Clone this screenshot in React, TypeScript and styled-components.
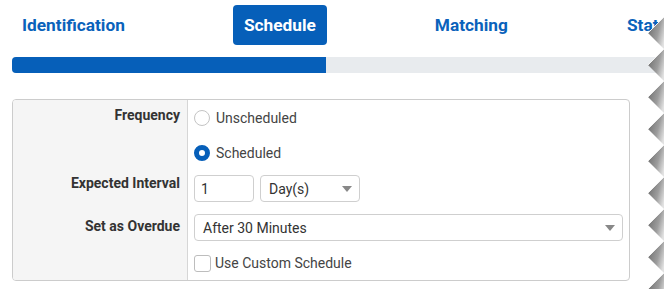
import React from 'react';
import styled, { createGlobalStyle } from 'styled-components';

const GlobalStyle = createGlobalStyle`
  html, body {
    margin: 0;
    padding: 0;
    background: #ffffff;
    font-family: Roboto, "Noto Sans", "Liberation Sans", sans-serif;
  }
`;

const steps = ['Identification', 'Schedule', 'Matching', 'Status'];
const activeStep = 1;

const TornEdge = () => {
  const teeth = Array.from({ length: 9 }, (_, i) => 17 + i * 32);
  return (
    <EdgeSvg width="16" height="289" viewBox="0 0 16 289">
      <defs>
        <linearGradient id="tooth" x1="0" y1="0.25" x2="1" y2="0.75">
          <stop offset="0" stopColor="#6e6e6e" />
          <stop offset="0.6" stopColor="#9d9d9d" />
          <stop offset="1" stopColor="#e2e2e2" />
        </linearGradient>
      </defs>
      {teeth.map((y) => (
        <g key={y}>
          <polygon points={`16,${y} 0,${y + 16} 16,${y + 32}`} fill="url(#tooth)" />
          <polyline points={`16,${y} 0,${y + 16}`} stroke="#f2f2f2" strokeWidth="1" fill="none" />
        </g>
      ))}
    </EdgeSvg>
  );
};

const Caret = () => (
  <CaretSvg width="10" height="6" viewBox="0 0 10 6">
    <polygon points="0,0 10,0 5,6" fill="#888" />
  </CaretSvg>
);

export default function App() {
  return (
    <>
      <GlobalStyle />
      <Page>
        <Steps>
          {steps.map((s, i) => (
            <Step key={s} active={i === activeStep}>
              {s}
            </Step>
          ))}
        </Steps>
        <Progress>
          <ProgressFill style={{ width: 314 }} />
        </Progress>

        <Panel>
          <Label pad={7}>Frequency</Label>
          <Field>
            <Option>
              <Radio />
              Unscheduled
            </Option>
            <Option>
              <Radio checked />
              Scheduled
            </Option>
          </Field>

          <Label pad={5}>Expected Interval</Label>
          <Field pt={5} pb={7}>
            <InlineRow>
              <TextInput>1</TextInput>
              <Select w={100}>
                <SelectText>Day(s)</SelectText>
                <Caret />
              </Select>
            </InlineRow>
          </Field>

          <Label pad={9}>Set as Overdue</Label>
          <Field pt={5} pb={5}>
            <Select>
              <SelectText>After 30 Minutes</SelectText>
              <Caret />
            </Select>
          </Field>

          <Label />
          <Field>
            <CheckRow>
              <Checkbox />
              Use Custom Schedule
            </CheckRow>
          </Field>
        </Panel>
        <TornEdge />
      </Page>
    </>
  );
}

const Page = styled.div`
  position: relative;
  width: 664px;
  height: 289px;
  overflow: hidden;
  padding: 5px 0 0 11px;
  box-sizing: border-box;
`;

const Steps = styled.div`
  display: flex;
  gap: 97px;
  white-space: nowrap;
`;

const Step = styled.div<{ active?: boolean }>`
  height: 40px;
  display: flex;
  align-items: center;
  padding: 0 11px;
  border-radius: 4px;
  font-size: 17.3px;
  font-weight: 700;
  color: ${({ active }) => (active ? '#ffffff' : '#0a62bb')};
  background: ${({ active }) => (active ? '#065fb9' : 'transparent')};
  flex-shrink: 0;
`;

const Progress = styled.div`
  margin: 12px 0 0 1px;
  height: 16px;
  width: 660px;
  background: #e8ebee;
  border-radius: 4px;
  overflow: hidden;
`;

const ProgressFill = styled.div`
  height: 100%;
  background: #065fb9;
`;

const Panel = styled.div`
  margin: 26px 0 0 1px;
  width: 618px;
  box-sizing: border-box;
  border: 1px solid #cccccc;
  border-radius: 4px;
  overflow: hidden;
  display: grid;
  grid-template-columns: 175px 1fr;
`;

const Label = styled.div<{ pad?: number }>`
  background: #f5f5f5;
  border-right: 1px solid #d6d6d6;
  padding: ${({ pad }) => pad ?? 0}px 7px 0 0;
  text-align: right;
  font-size: 14px;
  line-height: 16px;
  font-weight: 700;
  color: #333333;
`;

const Field = styled.div<{ pt?: number; pb?: number }>`
  padding: ${({ pt }) => pt ?? 0}px 6px ${({ pb }) => pb ?? 0}px 6px;
  font-size: 14px;
  color: #444444;
`;

const Option = styled.label`
  display: flex;
  align-items: center;
  gap: 6px;
  height: 35px;
`;

const Radio = styled.span<{ checked?: boolean }>`
  width: 16px;
  height: 16px;
  box-sizing: border-box;
  border-radius: 50%;
  border: ${({ checked }) => (checked ? '5px solid #065fb9' : '1px solid #c4c4c4')};
  background: #ffffff;
`;

const InlineRow = styled.div`
  display: flex;
  gap: 6px;
`;

const TextInput = styled.div`
  width: 60px;
  height: 27px;
  box-sizing: border-box;
  border: 1px solid #cfcfcf;
  border-radius: 4px;
  padding: 0 6px;
  display: flex;
  align-items: center;
  color: #333333;
`;

const Select = styled.div<{ w?: number }>`
  width: ${({ w }) => (w ? `${w}px` : '100%')};
  height: 27px;
  box-sizing: border-box;
  border: 1px solid #cfcfcf;
  border-radius: 4px;
  padding: 0 7px 0 8px;
  display: flex;
  align-items: center;
  justify-content: space-between;
  color: #333333;
`;

const SelectText = styled.span``;

const CaretSvg = styled.svg`
  display: block;
`;

const CheckRow = styled.label`
  display: flex;
  align-items: center;
  gap: 4px;
  height: 34px;
`;

const Checkbox = styled.span`
  width: 17px;
  height: 17px;
  box-sizing: border-box;
  border: 1px solid #bdbdbd;
  border-radius: 3px;
  background: #ffffff;
`;

const EdgeSvg = styled.svg`
  position: absolute;
  top: 0;
  right: 0;
`;
